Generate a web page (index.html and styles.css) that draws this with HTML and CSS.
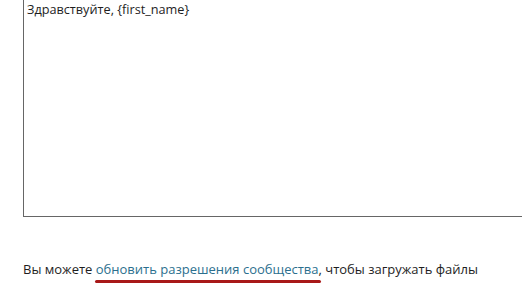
FILE: index.html
```
<html>
<head>
    <title>Сообщение</title>
    <link rel="stylesheet" href="styles.css">
</head>
<body>
    <div class="editor">
        <div class="message">Здравствуйте, {first_name}</div>
    </div>
    <p class="notice">Вы можете <a class="perm-link" href="#">обновить разрешения сообщества</a>, чтобы загружать файлы</p>
</body>
</html>
```

FILE: styles.css
```
body {
    margin: 0;
    background-color: #fff;
    font-family: "Open Sans", Arial, sans-serif;
    color: #1e1e1e;
    overflow: hidden;
}

.editor {
    margin-left: 23px;
    width: 520px;
    height: 216px;
    border: 1px solid #666;
    border-top: none;
}

.message {
    padding: 1px 3px;
    font-size: 12.7px;
    line-height: 16px;
}

.notice {
    margin: 43px 0 0 23px;
    font-size: 13px;
    line-height: 18px;
    white-space: nowrap;
}

.perm-link {
    position: relative;
    color: #2b6f8e;
    text-decoration: none;
}

.perm-link::after {
    content: "";
    position: absolute;
    left: -1px;
    right: -2px;
    bottom: -5px;
    height: 3px;
    border-radius: 2px;
    background-color: #a81818;
}
```
